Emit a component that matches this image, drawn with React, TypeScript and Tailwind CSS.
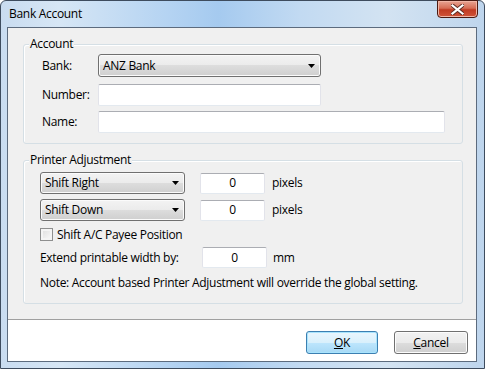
import type { ReactNode } from "react";

const FONT = "font-['Open_Sans','Noto_Sans',sans-serif] text-[12px] leading-[16px] tracking-[-0.3px] text-black";

function Combo({ value, className = "" }: { value: string; className?: string }) {
  return (
    <div
      className={`flex items-center justify-between rounded-[3px] border border-[#707070] bg-[linear-gradient(#f3f3f3,#ebebeb_50%,#dddddd_50%,#cfcfcf)] pl-[4px] pr-[4px] shadow-[inset_0_0_0_1px_#fbfbfb] ${className}`}
    >
      <span>{value}</span>
      <svg width="7" height="4" viewBox="0 0 7 4" className="mr-[1px]">
        <path d="M0 0h7L3.5 4z" fill="#000" />
      </svg>
    </div>
  );
}

function TextBox({ value = "", className = "" }: { value?: string; className?: string }) {
  return (
    <div
      className={`flex items-center justify-center rounded-[2px] border border-[#e2e3ea] border-t-[#abadb3] border-b-[#e3e9ef] bg-white ${className}`}
    >
      {value}
    </div>
  );
}

function Group({ title, children, className = "" }: { title: string; children: ReactNode; className?: string }) {
  return (
    <div className={`relative rounded-[3px] border border-[#d5dfe5] shadow-[inset_1px_1px_0_#ffffff] ${className}`}>
      <span className="absolute -top-[9px] left-[5px] bg-[#f0f0f0] px-[1px]">{title}</span>
      {children}
    </div>
  );
}

function Button({ children, primary, className = "" }: { children: ReactNode; primary?: boolean; className?: string }) {
  return (
    <div
      className={`flex h-[23px] items-center justify-center rounded-[3px] border ${
        primary
          ? "border-[#3c7fb1] bg-[linear-gradient(#eaf6fd,#d9f0fc_50%,#bee6fd_50%,#a7d9f5)] shadow-[inset_0_0_0_1px_#a9e4fd]"
          : "border-[#707070] bg-[linear-gradient(#f2f2f2,#ebebeb_50%,#dddddd_50%,#cfcfcf)] shadow-[inset_0_0_0_1px_#fcfcfc]"
      } ${className}`}
    >
      {children}
    </div>
  );
}

export default function App() {
  return (
    <div className={`${FONT} flex h-[369px] w-[485px] flex-col rounded-t-[6px] border border-[#3e4c5e] bg-[linear-gradient(90deg,#c9dcf0_0%,#d6e6f5_12%,#b4d3f2_35%,#a5caef_45%,#c2daf2_62%,#d3e3f2_80%,#bed5ed_100%)]`}>
      {/* title bar */}
      <div className="flex h-[26px] items-start justify-between">
        <div className="pl-[8px] pt-[5px]">Bank Account</div>
        <div className="mr-[6px] -mt-[1px] flex h-[18px] w-[41px] items-center justify-center rounded-b-[4px] border border-[#4a1a12] bg-[linear-gradient(#e8a493,#d66d55_45%,#c03b22_55%,#d0543a)] shadow-[inset_0_0_0_1px_#f0b5a5]">
          <svg width="13" height="11" viewBox="0 0 13 11">
            <path d="M1.5 1.5l10 8M11.5 1.5l-10 8" stroke="#5a2a22" strokeWidth="4" strokeLinecap="square" />
            <path d="M1.5 1.5l10 8M11.5 1.5l-10 8" stroke="#ffffff" strokeWidth="2.2" strokeLinecap="square" />
          </svg>
        </div>
      </div>

      {/* client area */}
      <div className="ml-[6px] mr-[7px] mb-[6px] flex flex-1 flex-col border border-[#5c6b7e]">
        <div className="flex h-[292px] flex-col border-b border-[#a0a0a0] bg-[#f0f0f0] pl-[15px] pt-[16px]">
          <Group title="Account" className="w-[440px] pl-[18px] pt-[9px] pb-[10px]">
            <div className="flex h-[23px] items-center">
              <span className="w-[56px]">Bank:</span>
              <Combo value="ANZ Bank" className="h-[23px] w-[223px]" />
            </div>
            <div className="mt-[7px] flex h-[22px] items-center">
              <span className="w-[56px]">Number:</span>
              <TextBox className="h-[22px] w-[223px]" />
            </div>
            <div className="mt-[5px] flex h-[22px] items-center">
              <span className="w-[56px]">Name:</span>
              <TextBox className="h-[22px] w-[347px]" />
            </div>
          </Group>

          <Group title="Printer Adjustment" className="mt-[16px] w-[440px] pl-[16px] pt-[11px] pb-[12px]">
            <div className="flex h-[22px] items-center">
              <Combo value="Shift Right" className="h-[22px] w-[145px]" />
              <TextBox value="0" className="ml-[15px] h-[21px] w-[65px]" />
              <span className="ml-[7px]">pixels</span>
            </div>
            <div className="mt-[5px] flex h-[22px] items-center">
              <Combo value="Shift Down" className="h-[22px] w-[145px]" />
              <TextBox value="0" className="ml-[15px] h-[21px] w-[65px]" />
              <span className="ml-[7px]">pixels</span>
            </div>
            <div className="mt-[7px] flex h-[13px] items-center">
              <div className="h-[13px] w-[13px] border border-[#8e8f8f] bg-[linear-gradient(135deg,#dcdcdc,#fbfbfb)] shadow-[inset_0_0_0_2px_#f4f4f4]" />
              <span className="ml-[4px]">Shift A/C Payee Position</span>
            </div>
            <div className="mt-[6px] flex h-[21px] items-center">
              <span className="w-[162px]">Extend printable width by:</span>
              <TextBox value="0" className="h-[21px] w-[65px]" />
              <span className="ml-[6px]">mm</span>
            </div>
            <div className="mt-[7px]">Note: Account based Printer Adjustment will override the global setting.</div>
          </Group>
        </div>

        <div className="flex flex-1 items-start justify-end gap-[16px] bg-white pr-[8px] pt-[11px]">
          <Button primary className="w-[72px]">
            <span><span className="underline">O</span>K</span>
          </Button>
          <Button className="w-[74px]">
            <span><span className="underline">C</span>ancel</span>
          </Button>
        </div>
      </div>
    </div>
  );
}
